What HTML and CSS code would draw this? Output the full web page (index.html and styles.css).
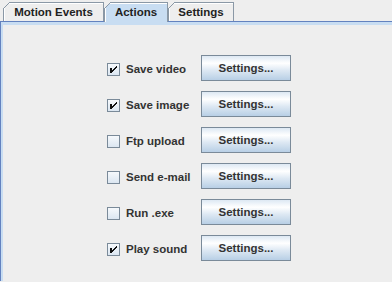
FILE: index.html
```html
<!DOCTYPE html>
<html lang="en">
<head>
    <meta charset="UTF-8">
    <title>Actions</title>
    <link rel="stylesheet" href="styles.css">
</head>
<body>
    <div class="tabs">
        <div class="tab tab-motion">Motion Events</div>
        <div class="tab tab-actions selected">Actions</div>
        <div class="tab tab-settings">Settings</div>
    </div>

    <div class="content">
        <div class="actions">
            <label class="check"><span class="box on"></span>Save video</label>
            <button class="btn">Settings...</button>

            <label class="check"><span class="box on"></span>Save image</label>
            <button class="btn">Settings...</button>

            <label class="check"><span class="box"></span>Ftp upload</label>
            <button class="btn">Settings...</button>

            <label class="check"><span class="box"></span>Send e-mail</label>
            <button class="btn">Settings...</button>

            <label class="check"><span class="box"></span>Run .exe</label>
            <button class="btn">Settings...</button>

            <label class="check"><span class="box on"></span>Play sound</label>
            <button class="btn">Settings...</button>
        </div>
    </div>
</body>
</html>
```

FILE: styles.css
```css
body {
    margin: 0;
    background-color: #eeeeee;
    font-family: "Liberation Sans", Arial, sans-serif;
    font-size: 11.5px;
    font-weight: bold;
    color: #333333;
    overflow: hidden;
}
.tabs {
    display: flex;
    padding: 2px 0 0 3px;
    height: 19px;
}
.tab {
    position: relative;
    box-sizing: border-box;
    height: 19px;
    border: 1px solid #8a98a6;
    border-bottom: none;
    box-shadow: inset 1px 1px 0 #ffffff;
    text-align: center;
    line-height: 18px;
    color: #222222;
}
.tab::before {
    content: "";
    position: absolute;
    left: -1px;
    top: -1px;
    width: 7px;
    height: 7px;
    background: linear-gradient(to bottom right, #eeeeee 0, #eeeeee calc(50% - 0.7px), #8a98a6 calc(50% - 0.7px), #8a98a6 calc(50% + 0.7px), transparent calc(50% + 0.7px));
}
.tab-motion {
    width: 101px;
}
.tab-actions {
    width: 64px;
}
.tab-settings {
    width: 66px;
}
.tab.selected {
    background-color: #c8ddf2;
    height: 20px;
    z-index: 1;
}
.content {
    border-top: 1px solid #6382bf;
    border-left: 1px solid #6382bf;
    box-shadow: inset 2px 3px 0 #c8ddf2;
    min-height: calc(100vh - 22px);
    padding: 33px 0 0 106px;
    box-sizing: border-box;
}
.actions {
    display: grid;
    grid-template-columns: 94px 90px;
    grid-auto-rows: 26px;
    row-gap: 10px;
    align-items: center;
}
.check {
    display: flex;
    align-items: center;
    gap: 6px;
    padding-top: 2px;
}
.box {
    box-sizing: border-box;
    width: 13px;
    height: 13px;
    border: 1px solid #7a8a99;
    background: linear-gradient(#f6f9fc, #dbe6f1);
    position: relative;
}
.box.on::after {
    content: "";
    position: absolute;
    left: 2px;
    top: 2px;
    width: 7px;
    height: 7px;
    background:
        linear-gradient(#111, #111) 0 2px / 2px 5px no-repeat,
        linear-gradient(#111, #111) 6px 0 / 1px 2px no-repeat,
        linear-gradient(#111, #111) 5px 1px / 1px 2px no-repeat,
        linear-gradient(#111, #111) 4px 2px / 1px 2px no-repeat,
        linear-gradient(#111, #111) 3px 3px / 1px 2px no-repeat,
        linear-gradient(#111, #111) 2px 4px / 1px 2px no-repeat;
}
.btn {
    box-sizing: border-box;
    width: 90px;
    height: 26px;
    border: 1px solid #7a8a99;
    background: linear-gradient(#dde8f3 0%, #ffffff 30%, #dde8f3 60%, #b8cfe5 100%);
    font-family: "Liberation Sans", Arial, sans-serif;
    font-size: 11.5px;
    font-weight: bold;
    color: #333333;
    padding: 0;
}
```
